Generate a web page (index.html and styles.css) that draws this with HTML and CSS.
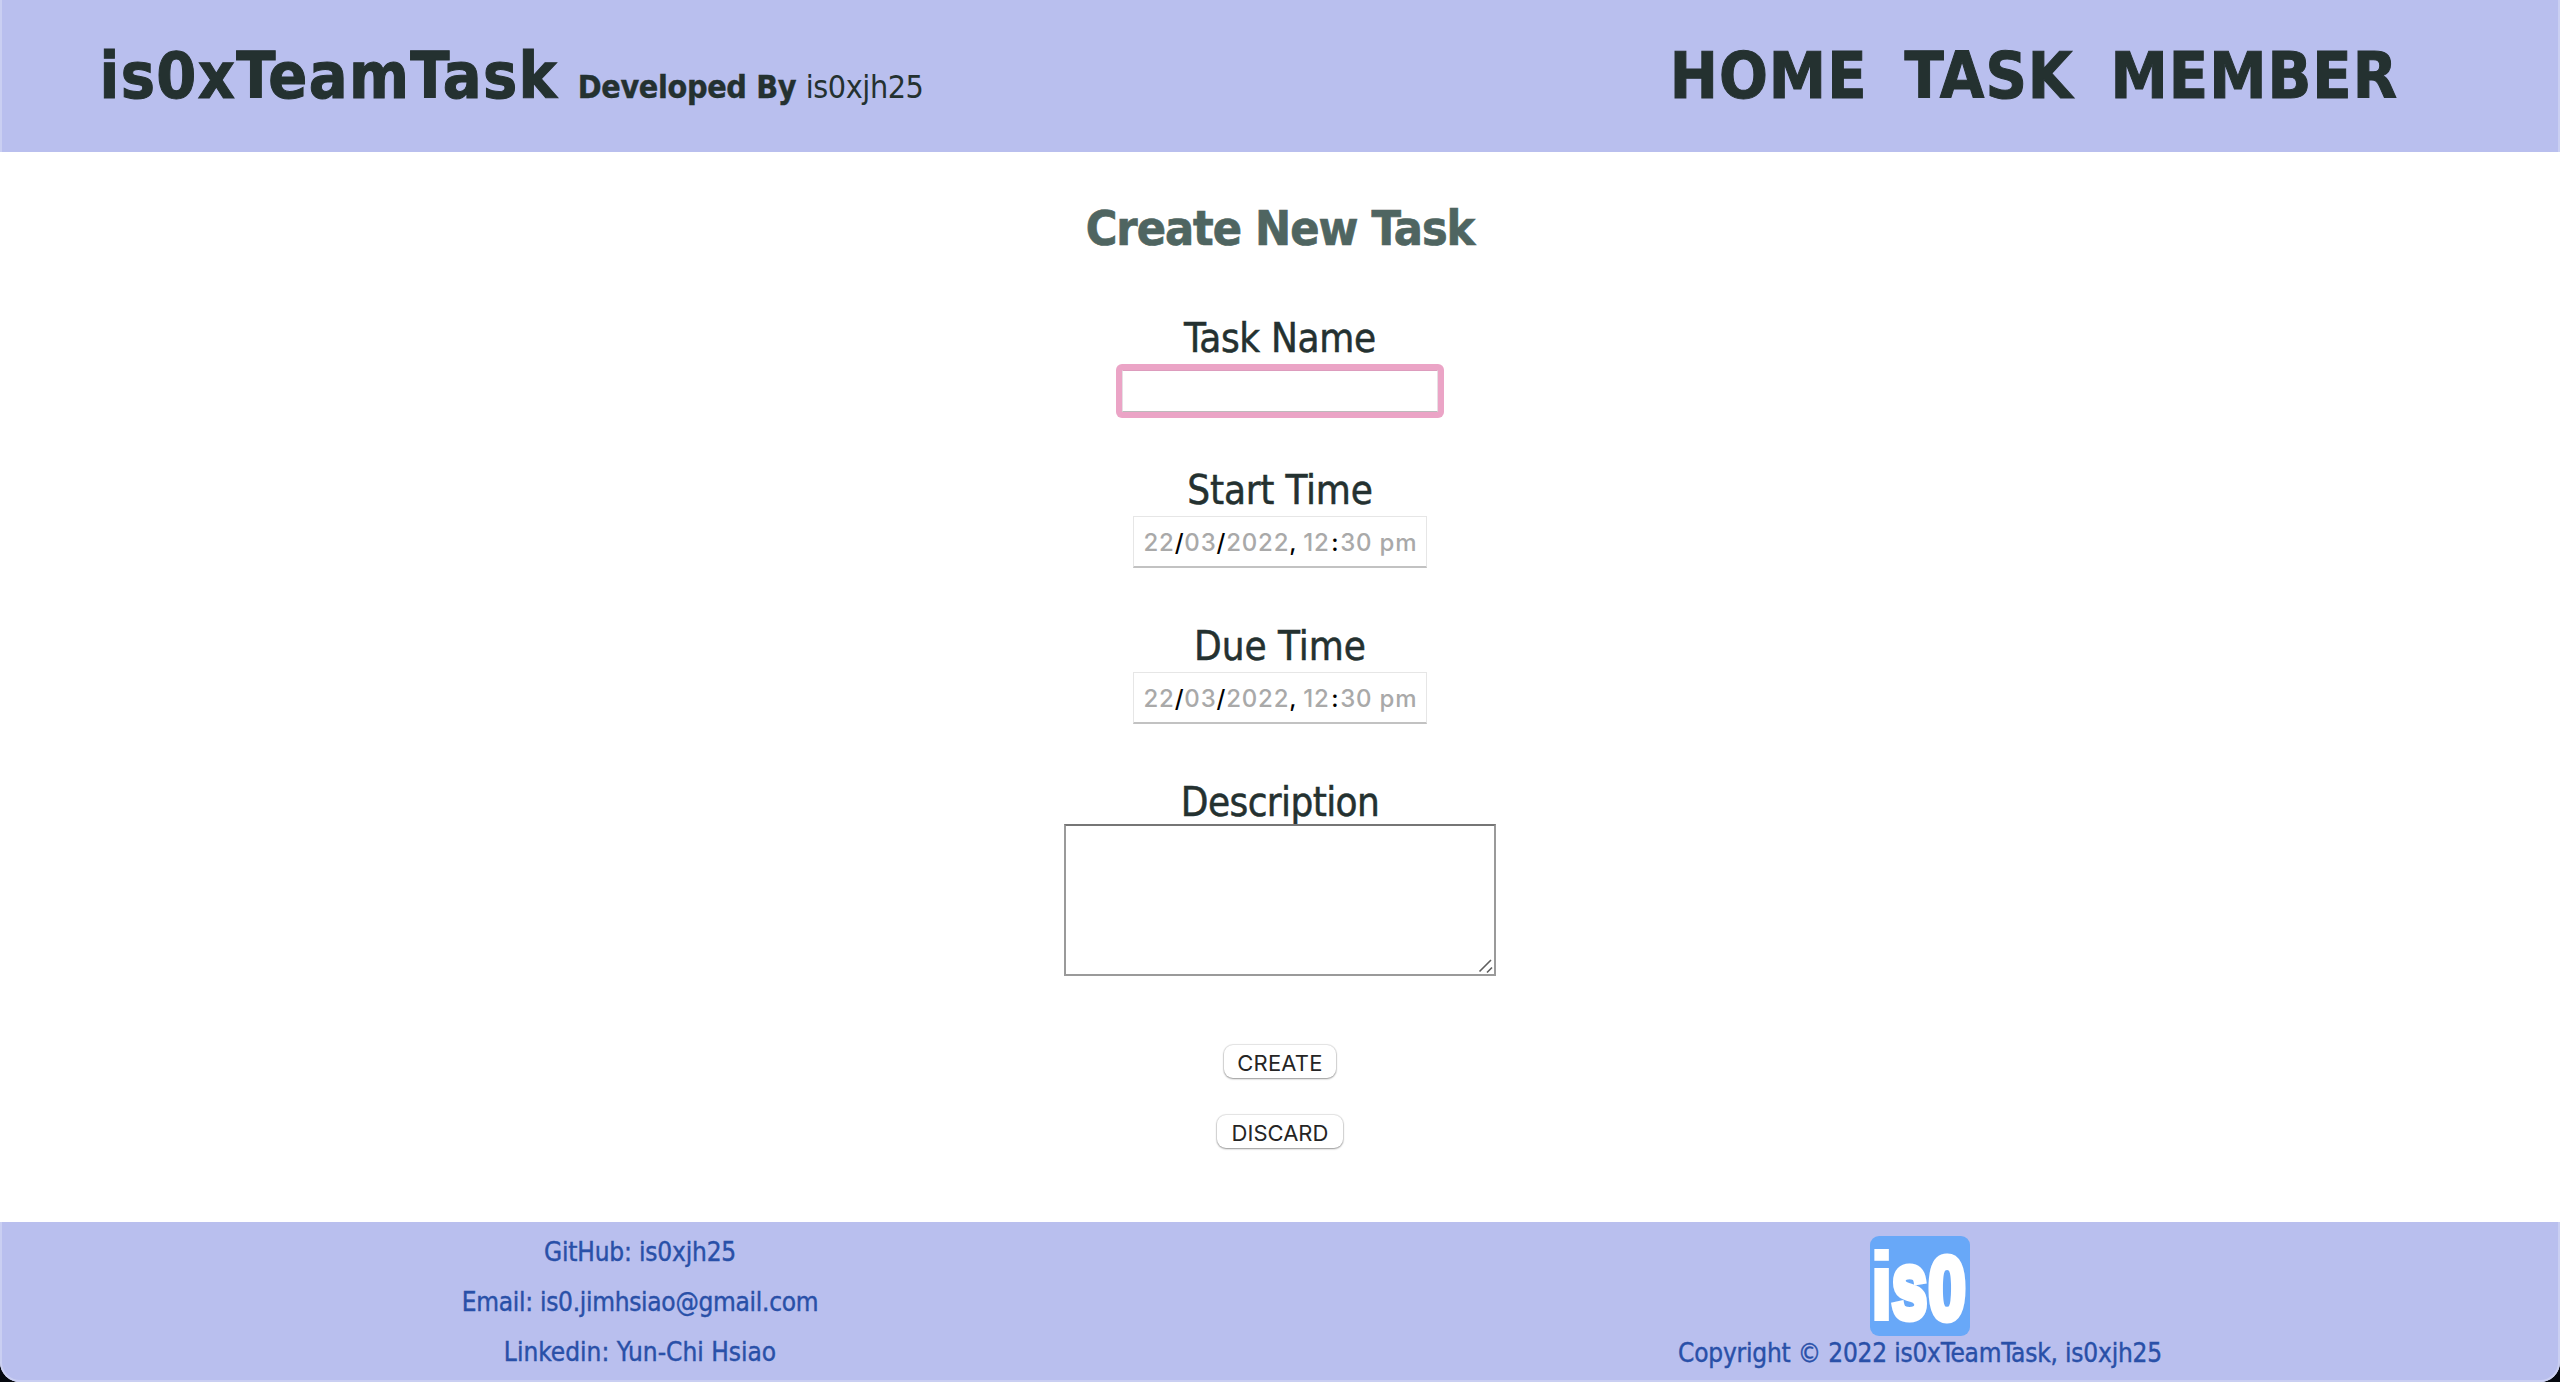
FILE: index.html
```
<!DOCTYPE html>
<html lang="en">
<head>
<meta charset="utf-8">
<title>is0xTeamTask</title>
<link rel="stylesheet" href="styles.css">
</head>
<body>
<div class="page">
  <header class="header">
    <div class="brand">
      <span class="brand-name">is0xTeamTask</span>
      <span class="brand-by">Developed By</span>
      <span class="brand-author">is0xjh25</span>
    </div>
    <nav class="nav">
      <a>HOME</a>
      <a>TASK</a>
      <a>MEMBER</a>
    </nav>
  </header>

  <main class="main">
    <h2 class="title">Create New Task</h2>
    <form class="form">
      <div class="field">
        <label class="label label-name">Task Name</label>
        <div class="input-ring"><div class="text-input"></div></div>
      </div>
      <div class="field">
        <label class="label label-start">Start Time</label>
        <div class="date-input"><span class="part">22</span>/<span class="part">03</span>/<span class="part">2022</span>, <span class="part hour">12</span><span class="colon">:</span><span class="part">30</span> <span class="part">pm</span></div>
      </div>
      <div class="field">
        <label class="label label-due">Due Time</label>
        <div class="date-input"><span class="part">22</span>/<span class="part">03</span>/<span class="part">2022</span>, <span class="part hour">12</span><span class="colon">:</span><span class="part">30</span> <span class="part">pm</span></div>
      </div>
      <div class="field">
        <label class="label label-desc">Description</label>
        <div class="textarea">
          <svg class="grip" width="16" height="16" viewBox="0 0 16 16"><path d="M1.5 13.5 13 2M9 14.500 14 9.500"/></svg>
        </div>
      </div>
      <div class="actions">
        <button type="button" class="btn btn-create">CREATE</button>
        <button type="button" class="btn btn-discard">DISCARD</button>
      </div>
    </form>
  </main>

  <footer class="footer">
    <div class="contacts">
      <span class="github">GitHub: is0xjh25</span>
      <span class="email">Email: is0.jimhsiao@gmail.com</span>
      <span class="linkedin">Linkedin: Yun-Chi Hsiao</span>
    </div>
    <div class="legal">
      <svg class="logo" width="100" height="100" viewBox="0 0 100 100">
        <rect width="100" height="100" rx="9"/>
        <g class="logo-text">
          <text class="thin" transform="translate(-0.9 84) scale(.95 1)" font-size="96">i</text>
          <text transform="translate(21.800 82) scale(.68 1)" font-size="94">s</text>
          <text transform="translate(58.4 82.500) scale(.75 1)" font-size="89">0</text>
        </g>
      </svg>
      <span class="copyright">Copyright © 2022 is0xTeamTask, is0xjh25</span>
    </div>
  </footer>
</div>
</body>
</html>
```
FILE: styles.css
```
* { box-sizing: border-box; }

html { background: #05080f; }

body {
  margin: 0;
  font-family: "DejaVu Sans Condensed", "DejaVu Sans", sans-serif;
  color: #243130;
}

.page {
  position: relative;
  display: flex;
  flex-direction: column;
  height: 1382px;
  overflow: hidden;
  background: #fff;
  border-radius: 0 0 20px 20px;
}

/* faint highlight along the window edge */
.page::after {
  content: "";
  position: absolute;
  inset: 0;
  border: 2px solid rgba(255, 255, 255, .25);
  border-top: 0;
  border-radius: 0 0 20px 20px;
}

.header {
  display: flex;
  justify-content: space-between;
  align-items: baseline;
  height: 152px;
  padding: 36px 162px 0 99.600px;
  background: #b9bfee;
  white-space: nowrap;
}

.brand {
  display: flex;
  align-items: baseline;
}

.brand-name {
  font-size: 64px;
  font-weight: bold;
  line-height: 80px;
  letter-spacing: 1.36px;
  -webkit-text-stroke: 1px;
}

.brand-by {
  margin-left: 19.500px;
  font-size: 32px;
  font-weight: bold;
  letter-spacing: -.37px;
  -webkit-text-stroke: .4px;
}

.brand-author {
  margin-left: 9.500px;
  font-size: 32px;
  letter-spacing: -.42px;
}

.nav {
  display: flex;
  gap: 37px;
  font-size: 64px;
  font-weight: bold;
  line-height: 80px;
  letter-spacing: 1px;
  -webkit-text-stroke: 1px;
}

.main {
  display: flex;
  flex-direction: column;
  align-items: center;
  height: 1070px;
  padding-top: 48px;
}

.title {
  margin: 0 0 58px;
  font-size: 48px;
  line-height: 56px;
  letter-spacing: -.99px;
  -webkit-text-stroke: .7px;
  color: #4f6561;
}

.form,
.field,
.actions {
  display: flex;
  flex-direction: column;
  align-items: center;
}

.field {
  height: 156px;
}

.field:first-child {
  height: 152px;
}

.label {
  font-size: 40px;
  line-height: 48px;
  letter-spacing: -.2px;
  -webkit-text-stroke: .5px;
}

.label-name { letter-spacing: -.31px; }
.label-due { letter-spacing: 0; }
.label-desc { letter-spacing: -.6px; }

.input-ring {
  margin-top: 2px;
  padding: 6px;
  border-radius: 6px;
  background: #eba4c6;
}

.text-input {
  width: 316px;
  height: 42px;
  background: #fff;
  border: 1px solid #e6e0e4;
  border-top-color: #dd9cbd;
  border-bottom-color: #bdb9bb;
}

.date-input {
  width: 294px;
  height: 52px;
  margin-top: 2px;
  padding-left: 9.500px;
  border: 1px solid #e6e6e6;
  border-bottom: 2px solid #c2c2c2;
  font: 500 24px/52px Inter, sans-serif;
  letter-spacing: .8px;
  white-space: nowrap;
  color: #000;
}

.part { color: #a9a9a9; }

.hour { margin-left: -1px; }

.colon { margin: 0 1px 0 1.500px; }

.textarea {
  display: flex;
  justify-content: flex-end;
  align-items: flex-end;
  width: 432px;
  height: 152px;
  margin-top: -2px;
  background: #fff;
  border: 2px solid #9a9a9a;
  border-top-color: #767676;
  flex: none;
}

.grip {
  fill: none;
  stroke: #5f5f5f;
  stroke-width: 1.6;
}

.actions {
  gap: 37px;
  margin-top: 111px;
}

.btn {
  height: 33px;
  padding: 3px 0 0;
  background: #fff;
  border: 0;
  border-radius: 9px;
  box-shadow: 0 0 1px 1px rgba(0, 0, 0, .1), 0 1px 2px rgba(0, 0, 0, .35);
  font: 22px/30px Inter, sans-serif;
  color: #252525;
}

.btn-create {
  width: 112px;
  letter-spacing: .21px;
}

.btn-discard { width: 126px; }

.footer {
  display: flex;
  height: 160px;
  background: #b9bfee;
  font-size: 26px;
  color: #2950a8;
  -webkit-text-stroke: .4px;
}

.contacts,
.legal {
  display: flex;
  flex: 1;
  flex-direction: column;
  align-items: center;
}

.contacts {
  padding-top: 5px;
  line-height: 50px;
}

.github { letter-spacing: -.17px; }
.email { letter-spacing: -.29px; }

.legal { padding-top: 14px; }

.logo { fill: #68a8f8; }

.logo-text {
  fill: #fff;
  stroke: #fff;
  stroke-width: 7px;
  font-family: "Liberation Sans", sans-serif;
  font-weight: bold;
}

.logo-text .thin { stroke-width: 2px; }

.copyright {
  line-height: 34px;
  letter-spacing: -.2px;
}
```
